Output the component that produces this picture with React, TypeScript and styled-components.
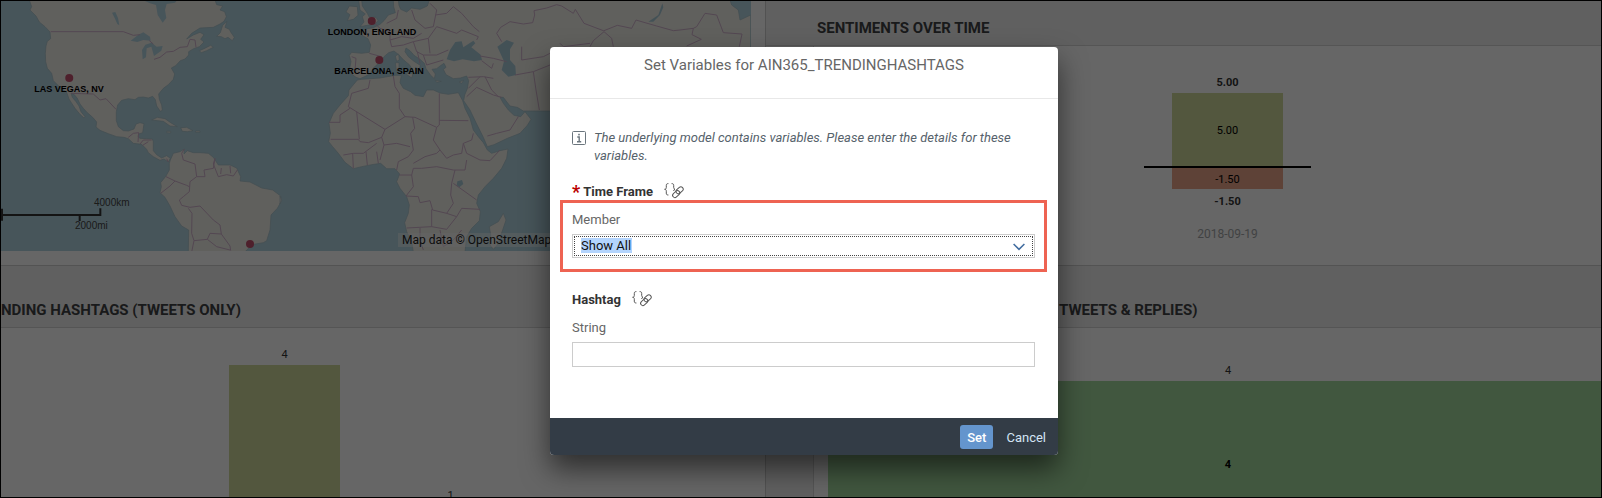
import React from "react";
import styled, { createGlobalStyle } from "styled-components";

const GlobalStyle = createGlobalStyle`
  * { box-sizing: border-box; }
  body {
    margin: 0;
    font-family: Roboto, "Liberation Sans", sans-serif;
    font-size: 14px;
    color: #333;
  }
  h2, h3, p { margin: 0; font-weight: normal; }
`;

const Page = styled.div`
  position: relative;
  height: 100vh;
  overflow: hidden;
  background: #fff;
`;

const Dashboard = styled.main`
  display: grid;
  grid-template-columns: 765fr 837fr;
  grid-template-rows: 266px 1fr;
  height: 100%;
`;

const Tile = styled.section<{ $left?: boolean }>`
  display: flex;
  flex-direction: column;
  min-width: 0;
  overflow: hidden;
  border-bottom: 1px solid #d0d0d0;
  border-left: ${(p) => (p.$left ? "0" : "1px solid #ccc")};
  background: #fff;
`;

const TileTitle = styled.h2<{ $short?: boolean; $indent: number }>`
  flex: none;
  height: ${(p) => (p.$short ? 46 : 62)}px;
  padding-top: ${(p) => (p.$short ? 18 : 34)}px;
  padding-left: ${(p) => p.$indent}px;
  border-bottom: 1px solid #d4d4d4;
  background: #f0f0f0;
  font-size: 15px;
  line-height: 20px;
  font-weight: 700;
  white-space: nowrap;
  color: #404244;
`;

const Guttered = styled.div`
  flex: 1;
  min-height: 0;
  display: flex;
  padding-left: 47px;
  background: #efefef;
`;

const Card = styled.div`
  flex: 1;
  min-width: 0;
  overflow: hidden;
  border-left: 1px solid #d4d4d4;
  background: #fff;
`;

/* ---- map ---- */

const MapBox = styled.div`
  position: relative;
  height: 251px;
  margin-right: 14px;
  overflow: hidden;
  background: #b2d4e0;
`;

const MapDrawing = styled.svg`
  display: block;
  width: 100%;
  height: 100%;
`;

const Pin = styled.div`
  position: absolute;
  transform: translateX(-50%);
  display: flex;
  flex-direction: column;
  align-items: center;
  font-family: "Liberation Sans", sans-serif;
  font-size: 9px;
  line-height: 14px;
  font-weight: 700;
  white-space: nowrap;
  color: #000;

  &::before {
    content: "";
    width: 8px;
    height: 8px;
    border-radius: 50%;
    background: #c4506e;
  }
`;

const ScaleLabel = styled.span`
  position: absolute;
  font-family: "Liberation Sans", sans-serif;
  font-size: 10px;
  line-height: 12px;
  color: #444;
`;

const Attribution = styled.span`
  position: absolute;
  right: 181px;
  bottom: 4px;
  width: 172px;
  padding-left: 4px;
  overflow: hidden;
  background: rgba(255, 255, 255, 0.4);
  font-family: Roboto, sans-serif;
  font-size: 12px;
  line-height: 14px;
  white-space: nowrap;
  color: #222;
`;

const pins = [
  { name: "LAS VEGAS, NV", x: 69, y: 74 },
  { name: "LONDON, ENGLAND", x: 372, y: 17 },
  { name: "BARCELONA, SPAIN", x: 379, y: 56 },
  { name: "", x: 250, y: 240 },
];

const americas = [
  "M88 0L95 20 90 30 108 48 118 66 135 80 150 96 152 116 142 124 138 138 136 160 137 185 142 205 155 220 160 242 180 262 200 277 207 297 214 308 225 325 240 343 252 354 255 350 243 335 237 318 228 305 217 292 213 280 222 283 232 295 240 312 250 325 262 338 278 352 290 366 288 381 300 391 325 401 350 410 372 412 385 416 400 430 425 433 440 448 445 458 460 470 480 481 492 477 505 486 511 475 500 467 485 474 470 464 460 452 460 425 457 417 440 416 420 415 414 410 416 402 428 398 430 385 432 371 420 368 408 372 402 387 385 393 370 392 355 380 349 362 349 335 353 315 365 301 385 296 405 299 415 292 430 291 445 294 458 289 466 299 470 318 481 334 487 331 485 315 478 298 476 282 490 265 505 254 520 238 524 222 514 204 527 197 541 182 555 177 566 165 566 155 581 146 598 140 612 126 602 118 612 104 600 97 580 105 560 117 575 100 600 84 640 82 660 72 672 64 679 50 674 35 660 30 668 18 650 14 645 0Z",
  "M598 152L612 146 632 136 640 142 620 152 604 158Z",
  "M650 109L661 98 668 76 681 64 675 82 688 88 692 96 703 112 697 122 684 112 675 116 664 110Z",
  "M455 360L472 352 495 356 512 368 532 380 510 378 490 364Z",
  "M542 383L560 382 579 392 562 395 547 394ZM586 393l14 0 0 4-13 0ZM500 394l12 0 0 5-12-1Z",
  "M511 480L520 460 540 455 553 447 552 462 562 452 580 458 600 458 625 460 640 472 655 495 690 495 710 504 722 530 720 543 750 546 785 564 818 570 842 588 845 602 832 625 813 645 810 690 800 722 790 728 760 733 740 750 735 756 565 756 566 690 545 678 525 650 510 618 495 592 480 578 484 560 482 548 498 528 508 510 508 490Z",
];

const americasBorders = [
  "M152 95L370 95 400 106 420 104M448 122L460 132M462 178L480 172 500 156 520 154 540 142 562 140 570 118 585 120 588 142",
  "M213 280L245 281 280 282 300 300 318 296 348 328",
  "M385 412L400 400 416 398 414 426M420 432L430 420 455 420M428 436L445 425M500 476L505 486",
  "M553 447L545 460 550 480 585 492 590 530 570 545 568 575 550 590 538 600 545 616 570 622 600 618 640 660 660 675 664 702 630 700 622 718 582 722 575 700 576 640 565 625M498 530L525 543 560 556 568 560M482 580L510 558 525 543M590 530L615 530 612 510 640 505 645 475M645 475L640 492 655 530 680 524 700 528 712 510M664 504L662 522M690 498L692 520M582 722L575 756M622 718L650 740 690 750M664 702L690 738 692 752",
];

const oldWorld = [
  "M340 0L341 20 346 38 325 45 312 62 300 73 280 83 262 86 244 92 246 106 264 116 272 135 268 157 245 160 215 157 208 166 213 185 209 205 215 222 228 232 240 236 258 228 272 220 279 205 290 195 304 184 312 170 326 158 342 153 356 164 372 181 388 194 396 206 400 222 410 215 406 202 418 208 421 196 402 184 385 170 375 155 378 144 390 152 402 166 420 178 433 190 438 206 452 226 463 236 466 222 456 208 470 206 480 198 492 190 498 202 490 208 498 224 520 236 541 234 560 228 566 242 562 266 554 285 551 302 570 330 590 372 610 412 622 440 642 434 682 415 720 400 742 376 753 358 735 335 722 350 702 346 685 330 670 310 660 292 670 292 690 318 712 322 730 333 860 333 1412 333 1412 45 1380 60 1375 30 1355 15 1350 0 448 0 442 18 420 28 395 24 380 36 362 28 357 16 355 0Z",
  "M245 0L247 18 262 40 268 52 288 52 294 62 285 72 262 76 240 80 252 66 247 50 256 42 240 30 236 0Z",
  "M208 18L232 20 234 46 220 58 202 62 210 44 198 36Z",
  "M232 240L245 238 300 234 345 226 364 226 360 248 370 265 392 275 405 286 430 290 440 270 460 270 480 279 505 283 535 278 548 302 555 325 570 355 580 390 595 410 610 428 622 450 635 460 660 452 684 447 680 475 665 505 640 535 615 560 595 585 590 610 601 635 598 662 575 685 560 710 555 756 400 756 395 725 380 695 374 668 385 640 388 615 380 590 360 565 350 545 359 522 345 506 320 506 302 490 275 494 245 500 220 506 195 487 175 460 158 440 146 425 151 400 147 370 160 340 180 315 205 287 207 270Z",
  "M670 640L678 660 668 690 652 735 640 748 630 735 632 705 628 680 655 665Z",
  "M346 168l10-6 2 18-8 4ZM346 188l11 0 0 22-8 2ZM375 220l24 0-4 14ZM466 241l18 3-14 3ZM537 246l14-5-6 9Z",
  "M0 588q8 12 0 24Z",
];

const oldWorldWater = [
  "M500 178L510 150 526 126 545 124 550 142 580 122 586 130 574 142 602 164 606 180 582 184 548 178 522 184Z",
  "M652 140L680 120 702 128 690 148 690 180 706 198 708 225 685 230 665 210 672 184Z",
  "M532 544l14-4 4 12-12 10-8-6ZM1105 65L1135 45 1147 10 1150 22 1140 45 1120 65Z",
];

const oldWorldBorders = [
  "M205 320L215 280 265 265 270 240M340 228L345 260 358 280 358 325 375 350 405 352 470 382 478 375 478 280M478 361L565 362M205 320L315 388 375 350M315 388L305 412 265 428 240 425 235 418 152 418M230 335L238 418M147 367L180 367 180 345 210 325",
  "M398 352L404 385 392 400 400 450 385 470 355 485 350 510M470 382L460 420 480 450 470 460 435 470 400 490M480 450L500 475 520 465 545 460 550 430 575 420 580 400M550 430L560 460 600 480 630 482 660 450M305 412L312 435 300 480M312 435L350 430 390 440M258 455L262 495M290 455L295 490M218 460L220 505M190 465L220 460 250 460 290 430",
  "M358 525L395 525 400 505 425 505 470 500 520 510 555 510 560 480M395 525L400 560 378 588 415 590 420 608 450 602 458 630 500 640 520 610 512 585 515 550 525 510M520 550L555 575 590 600M500 640L530 650 545 625 600 628M455 628L455 680 380 684M455 680L500 688 530 650M420 684L420 720 430 750M480 690L490 740 520 720 545 690",
  "M275 62L300 85 330 95 330 120 365 110 400 115 425 100M320 70L350 55 355 30M395 30L405 60 435 85 460 80 470 30 450 10M330 120L335 140 370 135 400 125 445 115 470 80 530 100 545 90 595 110 590 120M400 125L410 155 430 165 470 165 505 150M445 115L450 160M412 155L420 190M430 165L440 195 490 180M466 45L500 40 520 20 545 40 580 80 598 95M215 170L228 175 225 210M268 160L305 170M600 168L640 175 680 185M605 182L635 205 640 190",
  "M565 232L610 230 640 235M565 265L600 230M560 290L590 262 640 285 665 292M615 230L635 270 655 290M622 408L650 400 690 390 715 350M705 225L760 215 810 195M760 215L768 270 778 330M725 140L725 180 790 170 810 160M840 130L850 140 930 130",
  "M665 125L650 100 662 82 690 65 730 72 758 68 764 45 762 32 800 24 830 14 845 18 880 40 886 28 912 70 970 92 972 92 1012 76 1055 85 1068 60 1095 68 1130 78 1180 92 1200 90 1240 85 1250 80 1275 40 1310 45 1330 98 1386 102 1378 140M972 95L940 122 930 140M972 95L995 115 1000 140M1240 85L1236 104 1264 118 1220 138",
];

function WorldMap() {
  return (
    <MapBox>
      <MapDrawing viewBox="0 0 2253 753" preserveAspectRatio="xMinYMin slice" aria-hidden="true">
        <g fill="#f1efe9" stroke="#a3bfc8" strokeWidth="2">
          {americas.map((d) => <path key={d} d={d} />)}
        </g>
        <g fill="#b2d4e0">
          <path d="M428 0L450 10 468 15 473 45 488 68 499 54 495 30 500 12 525 8 532 0Z" />
          <path d="M392 122L415 104 430 97 450 110 452 122 430 120 412 126Z" />
          <path d="M428 178L426 150 436 134 455 128 470 140 488 138 484 152 462 168 454 140 440 145 438 172Z" />
          <path d="M336 38l10-2 8 18 4 22-6-4-8-18Z" />
        </g>
        <g fill="none" stroke="#cfb2cc" strokeWidth="3" strokeLinejoin="round">
          {americasBorders.map((d) => <path key={d} d={d} />)}
        </g>
        <g transform="translate(840 0)">
          <g fill="#f1efe9" stroke="#a3bfc8" strokeWidth="2">
            {oldWorld.map((d) => <path key={d} d={d} />)}
          </g>
          <g fill="#a8cbd8">
            {oldWorldWater.map((d) => <path key={d} d={d} />)}
          </g>
          <g fill="none" stroke="#cfb2cc" strokeWidth="3" strokeLinejoin="round">
            {oldWorldBorders.map((d) => <path key={d} d={d} />)}
          </g>
        </g>
        <path d="M6 626V662M3 645H301V625M239 645V663" fill="none" stroke="#333" strokeWidth="6" />
      </MapDrawing>
      <ScaleLabel style={{ left: 94, top: 197 }}>4000km</ScaleLabel>
      <ScaleLabel style={{ left: 75, top: 220 }}>2000mi</ScaleLabel>
      {pins.map((pin) => (
        <Pin key={pin.x} style={{ left: pin.x, top: pin.y }}>{pin.name}</Pin>
      ))}
      <Attribution>Map data © OpenStreetMap</Attribution>
    </MapBox>
  );
}

/* ---- charts ---- */

const SentimentChart = styled.div`
  display: flex;
  flex-direction: column;
  align-items: center;
  padding: 27px 0 0 39px;
`;

const ChartLabel = styled.span<{ $bold?: boolean; $tone?: string }>`
  display: block;
  font-size: 11px;
  line-height: 20px;
  text-align: center;
  font-weight: ${(p) => (p.$bold ? 700 : 400)};
  color: ${(p) => p.$tone ?? "#333"};
`;

const Bar = styled.div<{ $height: number; $color: string }>`
  display: flex;
  align-items: center;
  justify-content: center;
  width: 111px;
  height: ${(p) => p.$height}px;
  padding-top: 2px;
  background: ${(p) => p.$color};
`;

const ZeroLine = styled.div`
  width: 167px;
  height: 2px;
  background: #000;
`;

const Totals = styled.div`
  display: flex;
  flex-direction: column;
  align-items: center;
  gap: 12px;
  padding-top: 3px;
`;

const DateLabel = styled.span`
  font-size: 12px;
  line-height: 20px;
  color: #a4a6a8;
`;

const HashtagBars = styled.div`
  flex: 1;
  display: flex;
  gap: 55px;
  padding-left: 229px;
  overflow: hidden;
`;

const BarColumn = styled.div<{ $drop: number }>`
  display: flex;
  flex-direction: column;
  flex: none;
  padding-top: ${(p) => p.$drop}px;
`;

const ReplyChart = styled.div`
  display: flex;
  flex-direction: column;
  height: 100%;
  margin-right: -26px;
  padding: 33px 0 0 14px;
`;

const ReplyBar = styled.div`
  flex: 1;
  padding-top: 74px;
  background: #a4da9f;
`;

/* ---- dialog ---- */

const Backdrop = styled.div`
  position: absolute;
  inset: 0;
  display: flex;
  align-items: center;
  justify-content: center;
  padding: 4px 0 0 6px;
  border: 1px solid #000;
  background: rgba(0, 0, 0, 0.6);
`;

const Dialog = styled.form`
  width: 508px;
  border-radius: 4px;
  overflow: hidden;
  background: #fff;
  box-shadow: 0 14px 28px rgba(0, 0, 0, 0.55);
`;

const DialogHeader = styled.header`
  padding: 8px 22px 23px;
  border-bottom: 1px solid #e8e8e8;
  text-align: center;
`;

const DialogTitle = styled.h2`
  font-size: 15px;
  line-height: 20px;
  color: #666;
`;

const DialogBody = styled.div`
  display: flex;
  flex-direction: column;
  padding: 30px 23px 51px 22px;
`;

const Notice = styled.div`
  display: flex;
  align-items: flex-start;
  gap: 8px;
  margin-bottom: 18px;
  font-size: 13px;
  line-height: 18px;
  font-style: italic;
  color: #56626b;

  svg { flex: none; margin-top: 2px; }
`;

const VariableName = styled.h3`
  display: flex;
  align-items: center;
  gap: 11px;
  height: 17px;
  font-size: 13px;
  line-height: 18px;
  font-weight: 700;
  color: #333;
`;

const Required = styled.span`
  margin-right: 3px;
  font-size: 18px;
  line-height: 18px;
  vertical-align: top;
  color: #b00;
`;

const Field = styled.div<{ $highlighted?: boolean }>`
  display: flex;
  flex-direction: column;
  gap: 5px;
  margin: 0 -12px 19px;
  padding: 8px 9px 11px;
  border: 3px solid ${(p) => (p.$highlighted ? "#ee6352" : "transparent")};

  &:last-child { margin-bottom: 0; padding-bottom: 0; border-bottom: 0; }
`;

const FieldLabel = styled.label`
  font-size: 13px;
  line-height: 18px;
  color: #666;
`;

const SelectWrap = styled.div`
  position: relative;
  padding: 1px;
  border: 1px solid #ccc;
  display: flex;

  svg {
    position: absolute;
    right: 9px;
    top: 8px;
    pointer-events: none;
  }
`;

const Select = styled.select`
  appearance: none;
  width: 100%;
  height: 20px;
  padding: 0 24px 0 6px;
  border: 1px dotted #444;
  border-radius: 0;
  background: linear-gradient(#b3d4fd, #b3d4fd) 6px 1px / 51px 15px no-repeat #fff;
  font: inherit;
  font-size: 13px;
  line-height: 16px;
  color: #111;
  outline: none;
`;

const TextInput = styled.input`
  height: 25px;
  padding: 0 8px;
  border: 1px solid #ccc;
  border-radius: 0;
  background: #fff;
  font: inherit;
`;

const DialogFooter = styled.footer`
  display: flex;
  justify-content: flex-end;
  gap: 4px;
  padding: 7px 3px 6px;
  background: #333c46;
`;

const Button = styled.button<{ $primary?: boolean }>`
  height: 24px;
  padding: 0 ${(p) => (p.$primary ? 7 : 9)}px;
  border: 0;
  border-radius: 3px;
  background: ${(p) => (p.$primary ? "#6495cd" : "transparent")};
  font: inherit;
  font-size: 13px;
  font-weight: ${(p) => (p.$primary ? 500 : 400)};
  color: ${(p) => (p.$primary ? "#fff" : "#d3e4f5")};
`;

function InfoIcon() {
  return (
    <svg width="14" height="14" viewBox="0 0 14 14" fill="none" stroke="#6a757d" aria-hidden="true">
      <rect x="0.5" y="0.5" width="13" height="13" rx="1" />
      <path d="M5.3 6H7.2V10.5M5 10.7H9.2" strokeWidth="1.4" />
      <rect x="6.2" y="2.8" width="1.6" height="1.6" fill="#6a757d" stroke="none" />
    </svg>
  );
}

function VariableLinkIcon() {
  return (
    <svg width="20" height="17" viewBox="0 0 20 17" fill="none" stroke="#555" strokeWidth="1" strokeLinecap="round" aria-hidden="true">
      <path d="M4 .6C2.6 .6 2.3 1.3 2.3 2.6V4.4C2.3 5.6 1.8 6.3 .6 6.3C1.8 6.3 2.3 7 2.3 8.2V10C2.3 11.3 2.6 12 4 12" />
      <path d="M8 .6C9.4 .6 9.7 1.3 9.7 2.6V4.2C9.7 5.2 10 5.8 11 6.2C10.2 6.5 9.8 7 9.7 7.6" />
      <rect x="11.6" y="5" width="8" height="4.6" rx="2.3" transform="rotate(-42 15.6 7.3)" />
      <rect x="8.2" y="8.8" width="8" height="4.6" rx="2.3" transform="rotate(-42 12.2 11.1)" />
    </svg>
  );
}

function Chevron() {
  return (
    <svg width="12" height="8" viewBox="0 0 12 8" fill="none" stroke="#426da0" strokeWidth="1.5" aria-hidden="true">
      <path d="M.6 1L6 6.4 11.4 1" />
    </svg>
  );
}

export default function App() {
  return (
    <Page>
      <GlobalStyle />
      <Dashboard>
        <Tile $left>
          <WorldMap />
        </Tile>
        <Tile>
          <TileTitle $short $indent={51}>SENTIMENTS OVER TIME</TileTitle>
          <Guttered>
            <Card>
              <SentimentChart>
                <ChartLabel $bold>5.00</ChartLabel>
                <Bar $height={73} $color="#cfd99b">
                  <ChartLabel $tone="#000">5.00</ChartLabel>
                </Bar>
                <ZeroLine />
                <Bar $height={21} $color="#eaa58a">
                  <ChartLabel $tone="#000">-1.50</ChartLabel>
                </Bar>
                <Totals>
                  <ChartLabel $bold>-1.50</ChartLabel>
                  <DateLabel>2018-09-19</DateLabel>
                </Totals>
              </SentimentChart>
            </Card>
          </Guttered>
        </Tile>
        <Tile $left>
          <TileTitle $indent={1}>NDING HASHTAGS (TWEETS ONLY)</TileTitle>
          <HashtagBars>
            <BarColumn $drop={17}>
              <ChartLabel>4</ChartLabel>
              <Bar $height={200} $color="#cfd99b" />
            </BarColumn>
            <BarColumn $drop={158}>
              <ChartLabel>1</ChartLabel>
              <Bar $height={50} $color="#cfd99b" />
            </BarColumn>
          </HashtagBars>
        </Tile>
        <Tile>
          <TileTitle $indent={293}>TWEETS &amp; REPLIES)</TileTitle>
          <Guttered>
            <Card>
              <ReplyChart>
                <ChartLabel>4</ChartLabel>
                <ReplyBar>
                  <ChartLabel $bold $tone="#000">4</ChartLabel>
                </ReplyBar>
              </ReplyChart>
            </Card>
          </Guttered>
        </Tile>
      </Dashboard>

      <Backdrop>
        <Dialog role="dialog" aria-labelledby="dialog-title" onSubmit={(e) => e.preventDefault()}>
          <DialogHeader>
            <DialogTitle id="dialog-title">Set Variables for AIN365_TRENDINGHASHTAGS</DialogTitle>
          </DialogHeader>
          <DialogBody>
            <Notice>
              <InfoIcon />
              <p>The underlying model contains variables. Please enter the details for these variables.</p>
            </Notice>
            <VariableName>
              <span><Required>*</Required>Time Frame</span>
              <VariableLinkIcon />
            </VariableName>
            <Field $highlighted>
              <FieldLabel htmlFor="member">Member</FieldLabel>
              <SelectWrap>
                <Select id="member" defaultValue="all">
                  <option value="all">Show All</option>
                </Select>
                <Chevron />
              </SelectWrap>
            </Field>
            <VariableName>
              <span>Hashtag</span>
              <VariableLinkIcon />
            </VariableName>
            <Field>
              <FieldLabel htmlFor="hashtag">String</FieldLabel>
              <TextInput id="hashtag" type="text" />
            </Field>
          </DialogBody>
          <DialogFooter>
            <Button type="submit" $primary>Set</Button>
            <Button type="button">Cancel</Button>
          </DialogFooter>
        </Dialog>
      </Backdrop>
    </Page>
  );
}
